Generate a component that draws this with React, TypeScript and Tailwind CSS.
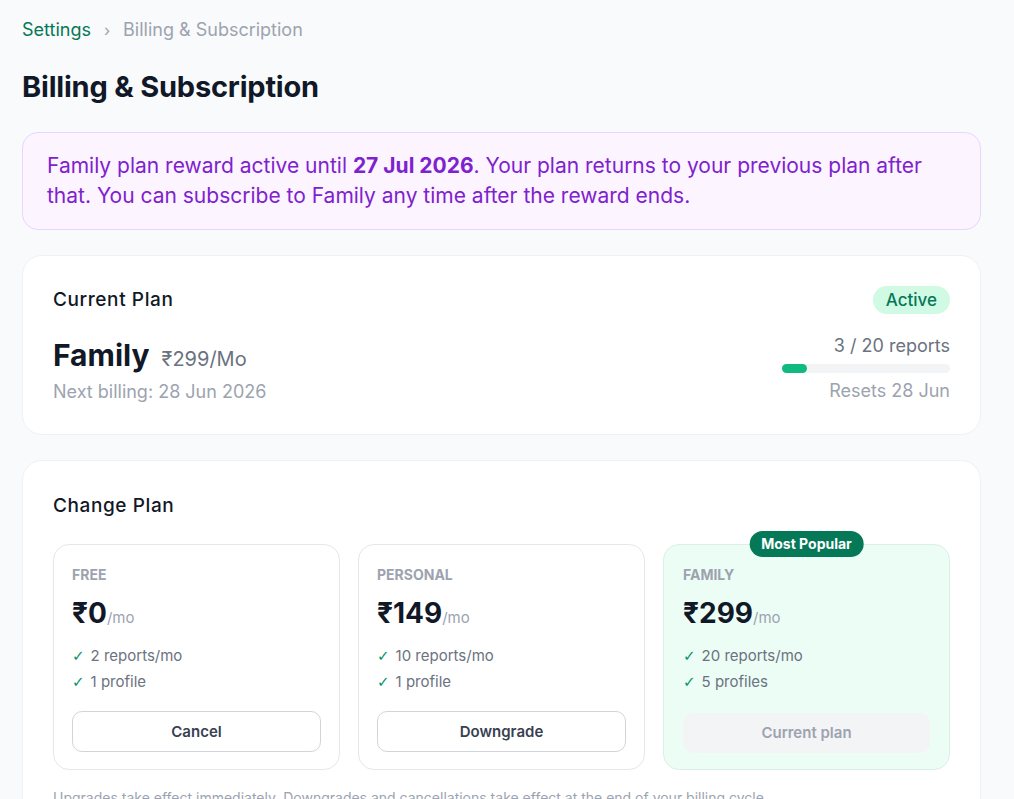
import React from "react";

const head = { fontFamily: "Inter, 'Noto Sans', sans-serif" };

function Check() {
  return (
    <span className="text-[#059669] mr-[6px] text-[15px]" style={{ fontFamily: "'DejaVu Sans', sans-serif" }}>
      ✓
    </span>
  );
}

type Plan = {
  name: string;
  price: string;
  features: string[];
  button: string;
  current?: boolean;
};

const plans: Plan[] = [
  { name: "FREE", price: "₹0", features: ["2 reports/mo", "1 profile"], button: "Cancel" },
  { name: "PERSONAL", price: "₹149", features: ["10 reports/mo", "1 profile"], button: "Downgrade" },
  { name: "FAMILY", price: "₹299", features: ["20 reports/mo", "5 profiles"], button: "Current plan", current: true },
];

export default function App() {
  return (
    <div
      className="min-h-[799px] bg-[#f9fafb] px-[22px] pt-[17px] pb-10 text-[#111827]"
      style={{ fontFamily: "Inter, 'Noto Sans', sans-serif" }}
    >
      <div className="flex items-center text-[18px] leading-[26px]">
        <span className="text-[#047857]">Settings</span>
        <span className="mx-[13px] text-[#9ca3af] text-[16px]">›</span>
        <span className="text-[#9ca3af]">Billing &amp; Subscription</span>
      </div>
      <h1 className="mt-[25px] text-[29px] leading-[38px] font-bold tracking-[-0.2px] text-[#111827]" style={head}>
        Billing &amp; Subscription
      </h1>

      <div className="mt-[26px] w-[959px] rounded-[16px] border border-[#e9d5ff] bg-[#fcf4ff] px-[24px] py-[18px] text-[21px] leading-[30px] text-[#7e22ce]">
        Family plan reward active until <span className="font-bold">27 Jul 2026</span>. Your plan returns to your previous plan after that. You can subscribe to Family any time after the reward ends.
      </div>

      <div className="mt-[25px] w-[959px] rounded-[20px] border border-[#f0f1f3] bg-white px-[30px] pt-[30px] pb-[30px] flex justify-between">
        <div>
          <div className="text-[19px] leading-[28px] font-medium tracking-[0.6px] text-[#111827]" style={head}>Current Plan</div>
          <div className="mt-[23px] flex items-baseline">
            <span className="text-[30px] leading-[36px] font-bold text-[#111827]">Family</span>
            <span className="ml-[12px] text-[20px] text-[#6b7280]">₹299/Mo</span>
          </div>
          <div className="mt-[5px] text-[18px] leading-[25px] text-[#9ca3af]">Next billing: 28 Jun 2026</div>
        </div>
        <div className="flex flex-col items-end">
          <div className="h-[28px] rounded-full bg-[#d1fae5] px-[13px] text-[17px] leading-[28px] font-medium text-[#047857]">Active</div>
          <div className="mt-[19px] text-[18px] leading-[25px] text-[#6b7280]">3 / 20 reports</div>
          <div className="mt-[6px] h-[9px] w-[168px] rounded-full bg-[#f3f4f6]">
            <div className="h-[9px] rounded-full bg-[#10b981]" style={{ width: "15%" }} />
          </div>
          <div className="mt-[5px] text-[18px] leading-[25px] text-[#9ca3af]">Resets 28 Jun</div>
        </div>
      </div>

      <div className="mt-[25px] w-[959px] rounded-[20px] border border-[#f0f1f3] bg-white px-[30px] pt-[31px] pb-[20px]">
        <div className="text-[19px] leading-[28px] font-medium tracking-[0.6px] text-[#111827]" style={head}>Change Plan</div>
        <div className="mt-[24px] grid grid-cols-3 gap-[18px]">
          {plans.map((p) => (
            <div
              key={p.name}
              className={
                p.current
                  ? "relative rounded-[16px] border border-[#dcefe6] bg-[#ecfdf5] px-[19px] pt-[20px] pb-[16px]"
                  : "relative rounded-[16px] border border-[#e5e7eb] bg-white px-[18px] pt-[20px] pb-[16px]"
              }
            >
              {p.current && (
                <div className="absolute left-1/2 top-[-14px] -translate-x-1/2 h-[26px] rounded-full bg-[#047857] px-[12px] text-[14px] leading-[26px] font-bold text-white whitespace-nowrap">
                  Most Popular
                </div>
              )}
              <div className="text-[14px] leading-[20px] font-bold text-[#9ca3af]">{p.name}</div>
              <div className="mt-[11px] flex items-baseline">
                <span className="text-[28px] leading-[34px] font-bold text-[#111827]">{p.price}</span>
                <span className="text-[15px] text-[#9ca3af]">/mo</span>
              </div>
              <div className="mt-[13px] text-[15px] leading-[25px] text-[#6b7280]">
                {p.features.map((f) => (
                  <div key={f}><Check />{f}</div>
                ))}
              </div>
              {p.current ? (
                <div className="mt-[18px] h-[40px] rounded-[10px] bg-[#f3f4f6] text-center text-[15px] leading-[40px] font-semibold text-[#9ca3af]">
                  {p.button}
                </div>
              ) : (
                <div className="mt-[16px] h-[41px] rounded-[10px] border border-[#d1d5db] bg-white text-center text-[15px] leading-[39px] font-semibold text-[#374151]">
                  {p.button}
                </div>
              )}
            </div>
          ))}
        </div>
        <div className="mt-[18px] text-[14px] leading-[20px] text-[#9ca3af]">
          Upgrades take effect immediately. Downgrades and cancellations take effect at the end of your billing cycle.
        </div>
      </div>
    </div>
  );
}
